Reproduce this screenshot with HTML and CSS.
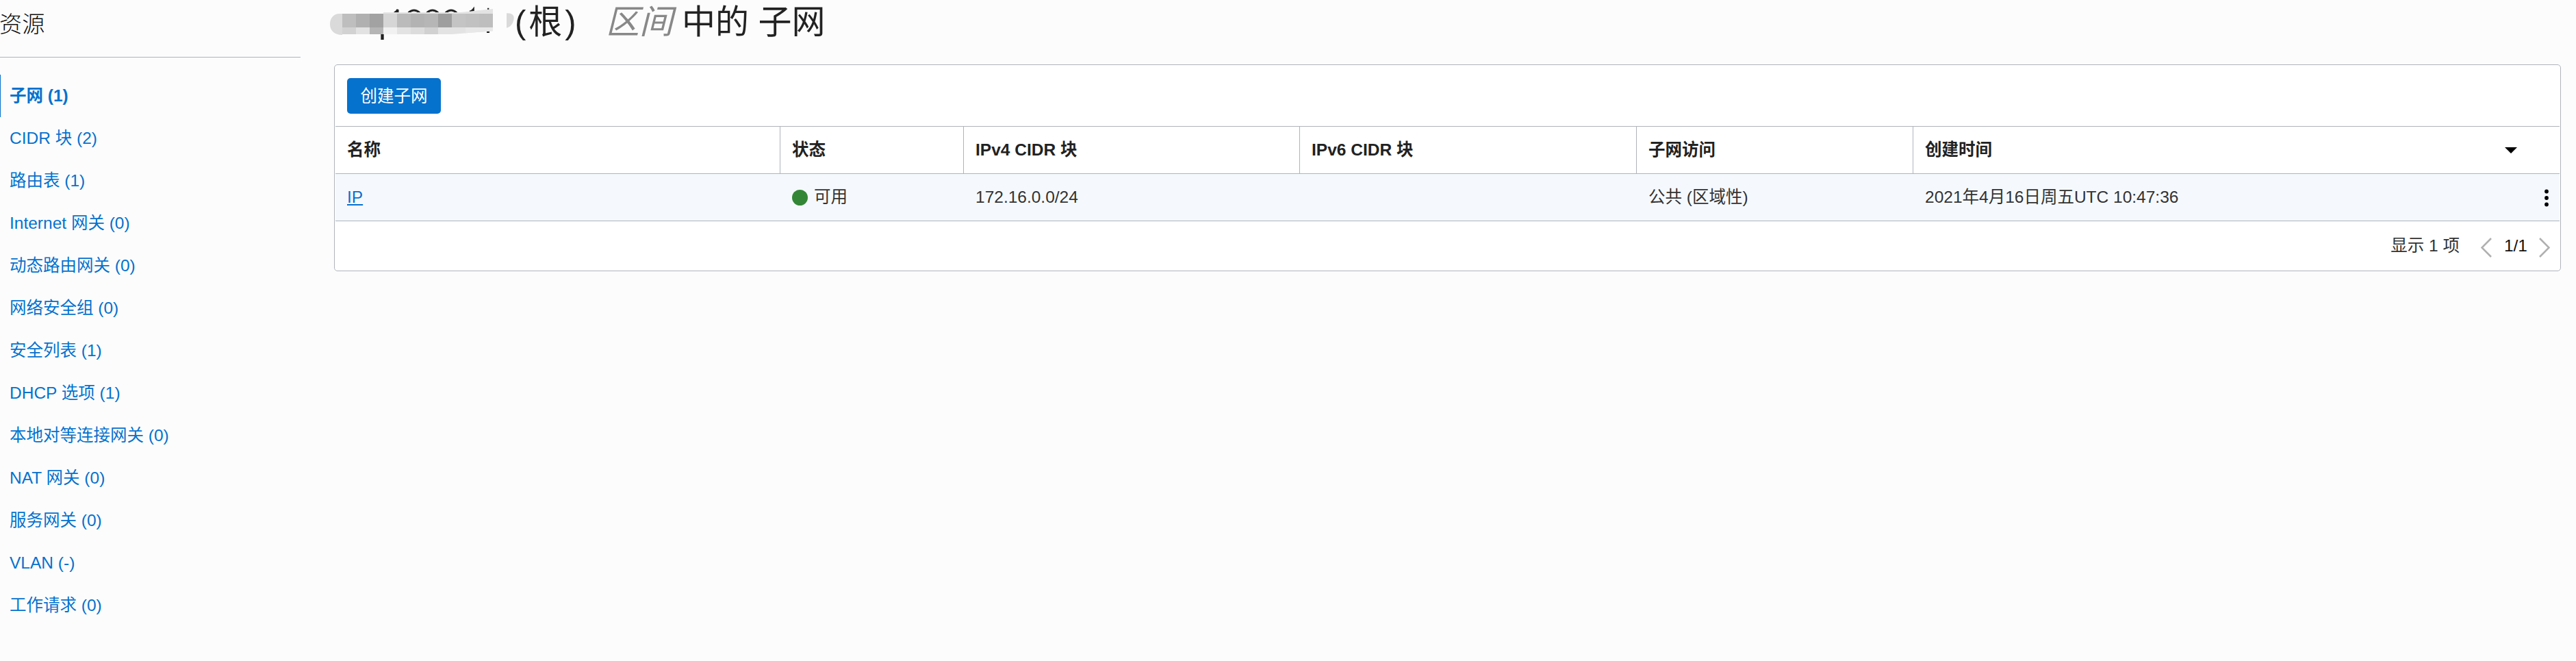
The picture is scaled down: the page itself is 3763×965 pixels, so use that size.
FILE: index.html
```html
<!DOCTYPE html>
<html lang="zh-CN">
<head>
<meta charset="utf-8">
<title>子网</title>
<link rel="stylesheet" href="styles.css">
</head>
<body>
<div class="page">
  <aside class="sidebar">
    <h2 class="sidebar-title">资源</h2>
    <nav class="nav">
      <a class="nav-item active">子网 (1)</a>
      <a class="nav-item">CIDR 块 (2)</a>
      <a class="nav-item">路由表 (1)</a>
      <a class="nav-item">Internet 网关 (0)</a>
      <a class="nav-item">动态路由网关 (0)</a>
      <a class="nav-item">网络安全组 (0)</a>
      <a class="nav-item">安全列表 (1)</a>
      <a class="nav-item">DHCP 选项 (1)</a>
      <a class="nav-item">本地对等连接网关 (0)</a>
      <a class="nav-item">NAT 网关 (0)</a>
      <a class="nav-item">服务网关 (0)</a>
      <a class="nav-item">VLAN (-)</a>
      <a class="nav-item">工作请求 (0)</a>
    </nav>
  </aside>
  <main class="main">
    <h1 class="title">
      <svg class="redacted" width="282" height="70" viewBox="0 0 846 210">
        <g fill="none" stroke="#222" stroke-width="9">
          <path d="M318 56q10-4 15-14v14M380 56q24-22 49 0M461 56q24-22 49 0M543 56q24-22 48 0M648 52q10-2 16-10v12M726 40h7"/>
        </g>
        <path fill="#222" d="M259 146h13v28h-13zM723 128h12v16h-12z"/>
        <path fill="#dadada" d="M90 60H78C50 60 36 82 36 106S52 150 78 152l12 1z"/>
        <path fill="#e3e3e3" d="M270 54H610L750 39v97L570 150H270z"/>
        <path fill="#bebebe" d="M90 60h60v60H90z"/><path fill="#b0b0b0" d="M150 60h60v60h-60z"/>
        <path fill="#a2a2a2" d="M210 60h60v60h-60z"/><path fill="#d6d6d6" d="M270 60h60v60h-60z"/>
        <path fill="#bbb" d="M330 60h60v60h-60z"/><path fill="#b3b3b3" d="M390 60h60v60h-60z"/>
        <path fill="#b6b6b6" d="M450 60h60v60h-60z"/><path fill="#9e9e9e" d="M510 60h60v60h-60z"/>
        <path fill="#c4c4c4" d="M570 60h60v60h-60z"/><path fill="#c1c1c1" d="M630 60h60v60h-60z"/>
        <path fill="#bebebe" d="M690 60h60v60h-60z"/>
        <path fill="#d2d2d2" d="M90 120h60v30H90z"/><path fill="#e2e2e2" d="M150 120h60v30h-60z"/>
        <path fill="#b5b5b5" d="M210 120h60v30h-60z"/><path fill="#f1f1f1" d="M270 120h60v30h-60z"/>
        <path fill="#dcdcdc" d="M390 120h60v30h-60z"/><path fill="#d1d1d1" d="M450 120h60v30h-60z"/>
        <path fill="#e8e8e8" d="M630 120h120v16l-120 9z"/>
        <path fill="#dadada" d="M810 58c22-2 32 8 32 20 0 20-14 42-32 44z"/>
      </svg>
      <span class="root">(根)</span>
      <em class="zone">区间</em>
      <span>中的 子网</span>
    </h1>
    <section class="card">
      <div class="toolbar"><button class="create">创建子网</button></div>
      <div class="row head">
        <div class="cell">名称</div>
        <div class="cell">状态</div>
        <div class="cell">IPv4 CIDR 块</div>
        <div class="cell">IPv6 CIDR 块</div>
        <div class="cell">子网访问</div>
        <div class="cell last">创建时间
          <svg class="sort" width="18" height="9" viewBox="0 0 18 9"><path d="M0 0h18L9 9z"/></svg>
        </div>
      </div>
      <div class="row data">
        <div class="cell"><a class="link">IP</a></div>
        <div class="cell"><i class="dot"></i>可用</div>
        <div class="cell">172.16.0.0/24</div>
        <div class="cell"></div>
        <div class="cell">公共 (区域性)</div>
        <div class="cell last">2021年4月16日周五UTC 10:47:36
          <svg class="more" width="6" height="26" viewBox="0 0 6 26"><circle cx="3" cy="3.5" r="2.9"/><circle cx="3" cy="13" r="2.9"/><circle cx="3" cy="22.5" r="2.9"/></svg>
        </div>
      </div>
      <div class="footer">
        <span class="count">显示 1 项</span>
        <svg class="chev" width="16" height="29" viewBox="0 0 16 29"><path d="M15 1L1.5 14.5 15 28"/></svg>
        <span class="pages">1/1</span>
        <svg class="chev" width="16" height="29" viewBox="0 0 16 29"><path d="M1 1l13.5 13.5L1 28"/></svg>
      </div>
    </section>
  </main>
</div>
</body>
</html>
```
FILE: styles.css
```css
* { box-sizing: border-box; }
body {
  margin: 0;
  background: #fcfcfc;
  color: #333;
  font: 24.5px/35px "Liberation Sans", "Noto Sans CJK SC", sans-serif;
  overflow: hidden;
}
.page { display: flex; height: 965px; }
.sidebar { width: 439px; flex: none; }
.sidebar-title {
  margin: 0;
  height: 84px;
  padding-top: 12px;
  border-bottom: 1px solid #aeb4bb;
  font-size: 33.25px;
  line-height: 48px;
  font-weight: 300;
  color: #111;
  text-indent: -1px;
}
.nav { margin-top: 25px; display: flex; flex-direction: column; }
.nav-item {
  height: 62px;
  padding: 13px 0 0 14px;
  color: #0572ce;
  white-space: nowrap;
}
.nav-item.active { border-left: 1px solid #0572ce; padding-left: 13px; font-weight: 700; }

.main { flex: 1; margin: 0 22px 0 49px; min-width: 0; }
.title {
  margin: 0 0 0 -18px;
  height: 94px;
  display: flex;
  align-items: flex-start;
  font-size: 49px;
  line-height: 64px;
  font-weight: 400;
  color: #222;
  white-space: nowrap;
}
.redacted { flex: none; }
.root { width: 133px; letter-spacing: 4px; }
.zone { width: 111px; color: #888; }

.card {
  height: 302px;
  border: 1px solid #aeb4bb;
  border-radius: 5px;
  background: #fff;
  padding: 0 1px;
}
.toolbar { height: 89px; padding: 19px 0 0 17px; }
.create {
  display: block;
  width: 137px;
  height: 52px;
  padding: 0;
  border: 0;
  border-radius: 5px;
  background: #0572ce;
  color: #fff;
  font: inherit;
}
.row {
  display: grid;
  grid-template-columns: 649px 268px 491px 492px 404px 1fr;
  border-top: 1px solid #aeb4bb;
  height: 69px;
}
.cell {
  display: flex;
  align-items: center;
  padding: 0 0 1px 17px;
  white-space: nowrap;
}
.cell + .cell { border-left: 1px solid transparent; }
.head { font-weight: 700; color: #222; }
.head .cell + .cell { border-left-color: #aeb4bb; }
.data { background: #f5f9fe; }
.last { justify-content: space-between; }
.sort { margin: 1px 62px 0 0; }
.more { margin: 2px 16px 0 0; }
.link { color: #0572ce; text-decoration: underline; text-decoration-thickness: 2px; text-underline-offset: 2px; }
.dot { width: 23px; height: 23px; margin: 2px 9px 0 0; border-radius: 50%; background: #348637; }
.footer {
  height: 73px;
  border-top: 1px solid #aeb4bb;
  display: flex;
  align-items: center;
  justify-content: flex-end;
  padding: 0 14px 1px 0;
}
.count { margin-right: 31px; }
.pages { margin: 0 17px 0 18px; color: #111; }
.chev { margin-top: 6px; fill: none; stroke: #b0b0b0; stroke-width: 2.6; }
```
